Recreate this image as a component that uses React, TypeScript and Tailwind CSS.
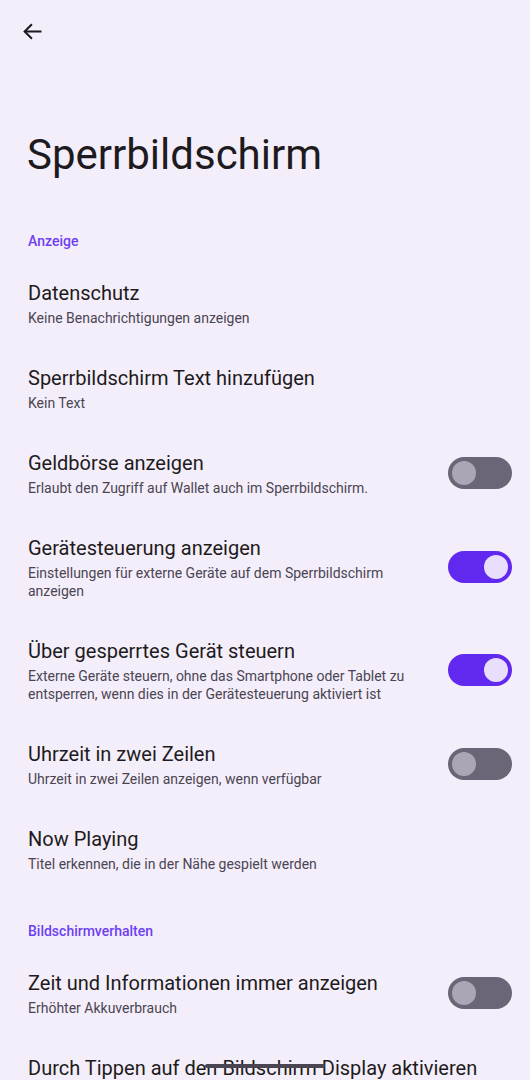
import React, { useState } from "react";

type Row = {
  title: string;
  summary: string;
  toggle?: boolean;
};

const displayRows: Row[] = [
  { title: "Datenschutz", summary: "Keine Benachrichtigungen anzeigen" },
  { title: "Sperrbildschirm Text hinzufügen", summary: "Kein Text" },
  {
    title: "Geldbörse anzeigen",
    summary: "Erlaubt den Zugriff auf Wallet auch im Sperrbildschirm.",
    toggle: false,
  },
  {
    title: "Gerätesteuerung anzeigen",
    summary: "Einstellungen für externe Geräte auf dem Sperrbildschirm anzeigen",
    toggle: true,
  },
  {
    title: "Über gesperrtes Gerät steuern",
    summary:
      "Externe Geräte steuern, ohne das Smartphone oder Tablet zu entsperren, wenn dies in der Gerätesteuerung aktiviert ist",
    toggle: true,
  },
  {
    title: "Uhrzeit in zwei Zeilen",
    summary: "Uhrzeit in zwei Zeilen anzeigen, wenn verfügbar",
    toggle: false,
  },
  { title: "Now Playing", summary: "Titel erkennen, die in der Nähe gespielt werden" },
];

const behaviourRows: Row[] = [
  { title: "Zeit und Informationen immer anzeigen", summary: "Erhöhter Akkuverbrauch", toggle: false },
  { title: "Durch Tippen auf den Bildschirm Display aktivieren", summary: "" },
];

const Switch = ({ initial }: { initial: boolean }) => {
  const [on, setOn] = useState(initial);
  return (
    <button
      onClick={() => setOn(!on)}
      className={`flex h-[32px] w-[64px] shrink-0 items-center rounded-full px-[4px] ${
        on ? "justify-end bg-[#6129ef]" : "justify-start bg-[#6b6577]"
      }`}
    >
      <span
        className={`h-[24px] w-[24px] rounded-full ${on ? "bg-[#e9defd]" : "bg-[#aca5b5]"}`}
      />
    </button>
  );
};

const SettingRow = ({ row }: { row: Row }) => (
  <div className="flex items-center gap-5 pl-[28px] pr-[18px] pt-[19px] pb-[18px]">
    <div className="flex-1 pr-[2px]">
      <div className="text-[20px] leading-[28px] text-[#1d1b20]">{row.title}</div>
      {row.summary && (
        <div className="mt-[2px] text-[14px] leading-[18px] text-[#4a4552]">{row.summary}</div>
      )}
    </div>
    {row.toggle !== undefined && <Switch initial={row.toggle} />}
  </div>
);

const SectionHeader = ({ label }: { label: string }) => (
  <div className="pl-[28px] pt-[30px] pb-[9px] text-[14px] font-medium leading-[20px] text-[#6c3ff2]">
    {label}
  </div>
);

export default function App() {
  return (
    <div
      className="relative h-[1080px] w-[530px] overflow-hidden bg-[#f4eefa]"
      style={{ fontFamily: "Roboto, 'Noto Sans', sans-serif" }}
    >
      <div className="flex h-[62px] items-center pl-[19px]">
        <svg width="27" height="27" viewBox="0 0 24 24" fill="none" stroke="#1d1b20" strokeWidth="1.8">
          <path d="M20 12H5" />
          <path d="M11.5 5.5 5 12l6.5 6.5" />
        </svg>
      </div>

      <h1 className="pl-[27px] pt-[67px] pb-[20px] text-[42px] leading-[52px] text-[#1d1b20]">
        Sperrbildschirm
      </h1>

      <SectionHeader label="Anzeige" />
      {displayRows.map((row) => (
        <SettingRow key={row.title} row={row} />
      ))}

      <SectionHeader label="Bildschirmverhalten" />
      {behaviourRows.map((row) => (
        <SettingRow key={row.title} row={row} />
      ))}

      <div className="absolute bottom-[12px] left-[205px] h-[4px] w-[120px] rounded-full bg-[#4a4553]" />
    </div>
  );
}
